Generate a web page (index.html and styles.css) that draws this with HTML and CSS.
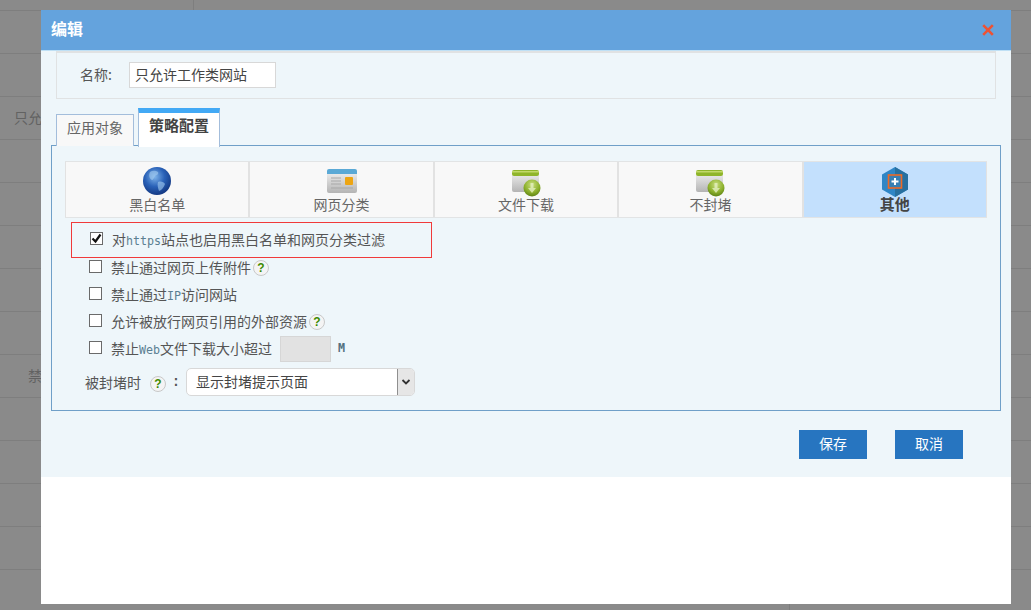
FILE: index.html
```html
<!DOCTYPE html>
<html lang="zh-CN">
<head>
<meta charset="utf-8">
<title>编辑</title>
<link rel="stylesheet" href="styles.css">
</head>
<body>
<svg class="defs" width="0" height="0" aria-hidden="true">
  <defs>
    <radialGradient id="globe" cx="0.42" cy="0.35" r="0.7">
      <stop offset="0" stop-color="#7fb4ea"/><stop offset="0.5" stop-color="#2a62b8"/><stop offset="1" stop-color="#10337c"/>
    </radialGradient>
    <linearGradient id="box" x1="0" y1="0" x2="0" y2="1">
      <stop offset="0" stop-color="#f6f6f6"/><stop offset="1" stop-color="#b4b4b4"/>
    </linearGradient>
    <radialGradient id="ball" cx="0.5" cy="0.3" r="0.75">
      <stop offset="0" stop-color="#c9de7e"/><stop offset="0.6" stop-color="#8cb02c"/><stop offset="1" stop-color="#557a10"/>
    </radialGradient>
    <symbol id="dl" viewBox="0 0 30 28">
      <rect x="1" y="1" width="27" height="22" rx="2" fill="url(#box)"/>
      <rect x="1" y="1" width="27" height="6" rx="2" fill="#8fb52a"/>
      <rect x="1" y="2" width="27" height="1.5" fill="#c2d96a"/>
      <circle cx="21" cy="19" r="8.5" fill="url(#ball)"/>
      <path d="M19.5 14h3v5h2.5L21 24l-4-5h2.5z" fill="#e4efc0" opacity=".8"/>
    </symbol>
  </defs>
</svg>

<main class="page">
  <div class="row row-top"></div>
  <div class="row"></div>
  <div class="row"></div>
  <div class="row"><span class="cell">只允</span></div>
  <div class="row"></div><div class="row"></div><div class="row"></div><div class="row"></div><div class="row"></div>
  <div class="row"><span class="cell">禁</span></div>
  <div class="row"></div><div class="row"></div><div class="row"></div><div class="row"></div><div class="row"></div>
</main>

<div class="bottom-line"></div>

<section class="dialog">
  <header class="dialog-head">
    <h1 class="dialog-title">编辑</h1>
    <svg class="close" viewBox="0 0 12 12" width="12" height="12"><path d="M1.2 1.2l9.6 9.6M10.8 1.2l-9.6 9.6" stroke="#ee5233" stroke-width="2.6" fill="none"/></svg>
  </header>

  <div class="dialog-body">
    <div class="name-box">
      <span class="name-label">名称:</span>
      <span class="name-input">只允许工作类网站</span>
    </div>

    <div class="tabs">
      <span class="tab">应用对象</span>
      <span class="tab tab-active">策略配置</span>
    </div>

    <div class="panel">
      <div class="nav">
        <div class="nav-item">
          <span class="nav-icon">
            <svg viewBox="0 0 28 28" width="28" height="28">
              <circle cx="14" cy="14" r="14" fill="url(#globe)"/>
              <path d="M7 5c3-2 6-1 8 0 1 2-1 3-3 4-1 2-2 4-3 4-2-1-4-4-2-8zM15 15c3-1 6 0 7 2-1 3-3 6-6 7-1-3-2-6-1-9z" fill="#a5cdf0" opacity=".6"/>
            </svg>
          </span>
          <span class="nav-text">黑白名单</span>
        </div>
        <div class="nav-item">
          <span class="nav-icon nav-icon-low">
            <svg viewBox="0 0 30 24" width="30" height="24">
              <rect width="30" height="24" rx="2" fill="url(#box)"/>
              <path d="M0 5V2a2 2 0 0 1 2-2h26a2 2 0 0 1 2 2v3z" fill="#5aa9d6"/>
              <rect x="18" y="8" width="8" height="8" rx="1" fill="#eda512"/>
              <path d="M4 9h10M4 12h10M4 15h10M4 19h22" stroke="#a8a8a8" stroke-width="1.2"/>
            </svg>
          </span>
          <span class="nav-text">网页分类</span>
        </div>
        <div class="nav-item">
          <span class="nav-icon nav-icon-low"><svg width="30" height="28"><use href="#dl"/></svg></span>
          <span class="nav-text">文件下载</span>
        </div>
        <div class="nav-item">
          <span class="nav-icon nav-icon-low"><svg width="30" height="28"><use href="#dl"/></svg></span>
          <span class="nav-text">不封堵</span>
        </div>
        <div class="nav-item nav-item-active">
          <span class="nav-icon">
            <svg viewBox="0 0 26 30" width="26" height="30">
              <path d="M13 0l13 7.5v15L13 30 0 22.500v-15z" fill="#2f86c6"/>
              <path d="M13 0l13 7.5v15L13 30z" fill="#28709f"/>
              <rect x="6.500" y="8" width="13" height="13" fill="#3a7fb2" stroke="#ee6a25" stroke-width="1.6"/>
              <path d="M13 11v7M9.500 14.500h7" stroke="#fff" stroke-width="2"/>
            </svg>
          </span>
          <span class="nav-text">其他</span>
        </div>
      </div>

      <div class="options">
        <label class="option option-marked">
          <span class="check check-on"><svg viewBox="0 0 13 13" width="13" height="13"><path d="M2.500 6.500l3 3 5-7" stroke="#111" stroke-width="2.200" fill="none"/></svg></span>
          <span>对<span class="latin">https</span>站点也启用黑白名单和网页分类过滤</span>
        </label>
        <label class="option">
          <span class="check"></span><span>禁止通过网页上传附件</span><span class="help">?</span>
        </label>
        <label class="option">
          <span class="check"></span><span>禁止通过<span class="latin">IP</span>访问网站</span>
        </label>
        <label class="option">
          <span class="check"></span><span>允许被放行网页引用的外部资源</span><span class="help">?</span>
        </label>
        <label class="option">
          <span class="check"></span><span>禁止<span class="latin">Web</span>文件下载大小超过</span>
          <span class="size-input"></span><span class="latin unit">M</span>
        </label>
      </div>

      <div class="blocked">
        <span class="blocked-label">被封堵时</span><span class="help help-spaced">?</span><span class="colon">:</span>
        <div class="select">
          <span class="select-value">显示封堵提示页面</span>
          <span class="select-arrow"><svg viewBox="0 0 10 6" width="10" height="6"><path d="M1.500 1l3.500 3.500L8.500 1" stroke="#333" stroke-width="1.800" fill="none"/></svg></span>
        </div>
      </div>
    </div>

    <div class="actions">
      <button class="btn" type="button">保存</button>
      <button class="btn" type="button">取消</button>
    </div>
  </div>
</section>
</body>
</html>
```

FILE: styles.css
```css
* { box-sizing: border-box; }

html, body {
  margin: 0;
  height: 610px;
  overflow: hidden;
}

body {
  position: relative;
  background: #8a8a8a;
  color: #555;
  font: 14px "Noto Sans CJK SC", "Liberation Sans", sans-serif;
}

.defs { position: absolute; }

.page { display: flex; flex-direction: column; }

.row {
  height: 43px;
  flex: none;
  display: flex;
  align-items: center;
  padding-bottom: 2px;
  border-bottom: 1px solid #7e7e7e;
}

.row-top {
  height: 11px;
  background: linear-gradient(to right, transparent 193px, #7e7e7e 193px, #7e7e7e 194px, transparent 194px);
}

.cell {
  width: 42px;
  text-align: right;
  white-space: nowrap;
  color: #626262;
}

.bottom-line {
  position: absolute;
  left: 789px;
  top: 604px;
  width: 1px;
  height: 6px;
  background: #7e7e7e;
}

.dialog {
  position: absolute;
  left: 41px;
  top: 10px;
  width: 970px;
  height: 594px;
  background: #fff;
}

.dialog-head {
  height: 41px;
  padding: 0 17px 1px 10px;
  display: flex;
  align-items: center;
  justify-content: space-between;
  background: #64a3dd;
  border-bottom: 1px solid #bfe0f5;
}

.dialog-title {
  margin: 0 0 3px;
  font-size: 16px;
  font-weight: 700;
  color: #fff;
  line-height: 36px;
}

.dialog-body {
  height: 426px;
  padding: 0 10px;
  background: #eef6fa;
}

.name-box {
  height: 48px;
  margin: 0 5px;
  padding: 9px 0 0 23px;
  display: flex;
  align-items: flex-start;
  border: 1px solid #e0e2e3;
  border-top-width: 2px;
}

.name-label {
  width: 49px;
  line-height: 24px;
}

.name-input {
  width: 147px;
  height: 26px;
  padding-left: 5px;
  line-height: 22px;
  background: #fff;
  border: 1px solid #d8d8d8;
  color: #444;
}

.tabs {
  height: 47px;
  margin-bottom: -1px;
  padding-left: 5px;
  display: flex;
  align-items: flex-end;
  gap: 4px;
  position: relative;
}

.tab {
  width: 78px;
  height: 32px;
  text-align: center;
  line-height: 24px;
  background: #f8f8f8;
  border: 1px solid #a3bddb;
  border-bottom: 0;
  color: #666;
}

.tab-active {
  width: 82px;
  height: 39px;
  line-height: 24px;
  font-size: 15px;
  font-weight: 700;
  color: #444;
  background: #fff;
  border-color: #a3bddb;
  border-top: 5px solid #42a9f5;
  margin-bottom: -1px;
  position: relative;
  z-index: 1;
}

.panel {
  height: 266px;
  padding: 15px 13px 0;
  border: 1px solid #6f9fc8;
}

.nav {
  height: 57px;
  display: grid;
  grid-template-columns: repeat(5, 1fr);
  border-top: 1px solid #e2e4e5;
  border-bottom: 1px solid #e2e4e5;
}

.nav-item {
  display: flex;
  flex-direction: column;
  align-items: center;
  background: #f8f8f8;
  border-left: 1px solid #e2e2e2;
  border-right: 1px solid #e2e2e2;
  color: #666;
}

.nav-item-active {
  background: #c3e0fd;
  color: #444;
  font-size: 15px;
  font-weight: 700;
}

.nav-icon {
  height: 33px;
  padding-top: 5px;
  display: flex;
  align-items: flex-start;
}

.nav-icon-low { padding-top: 7px; }

.nav-text {
  line-height: 20px;
  margin-top: -1px;
}

.options {
  display: flex;
  flex-direction: column;
  margin-top: 4px;
}

.option {
  height: 27px;
  padding-left: 24px;
  padding-bottom: 2px;
  display: flex;
  align-items: center;
  white-space: nowrap;
  color: #555;
}

.option-marked {
  width: 361px;
  height: 36px;
  margin-left: 6px;
  margin-bottom: -4px;
  padding-left: 18px;
  border: 1px solid #f03a3a;
}

.check {
  flex: none;
  width: 13px;
  height: 13px;
  margin-right: 9px;
  margin-top: -1px;
  background: #fff;
  border: 1px solid #6a6a6a;
  display: flex;
  align-items: center;
  justify-content: center;
}

.check svg { margin: -1px; }

.latin {
  font-family: "DejaVu Sans Mono", monospace;
  font-size: 11.67px;
  color: #5b7f92;
}

.help {
  flex: none;
  width: 16px;
  height: 16px;
  margin-left: 2px;
  margin-top: 3px;
  border-radius: 50%;
  border: 1px solid #c8c8c8;
  background: #f4f4f4;
  color: #3d8a00;
  font: 700 12px/14px "Liberation Sans", sans-serif;
  text-align: center;
}

.size-input {
  width: 51px;
  height: 26px;
  margin-left: 8px;
  margin-top: 2px;
  background: #e2e2e2;
  border: 1px solid #d6d6d6;
}

.unit {
  margin-left: 7px;
  font-weight: 700;
  color: #53707f;
}

.blocked {
  margin-top: 6px;
  padding-left: 20px;
  display: flex;
  align-items: center;
  height: 28px;
}

.blocked-label { margin-bottom: 1px; }

.help-spaced { margin-left: 9px; margin-top: 3px; }

.colon {
  width: 20px;
  text-align: center;
  font-family: "Liberation Mono", monospace;
  font-weight: 700;
}

.select {
  width: 229px;
  height: 28px;
  display: flex;
  background: #fff;
  border: 1px solid #d8d8d8;
  border-radius: 5px;
  overflow: hidden;
}

.select-value {
  flex: 1;
  padding-left: 9px;
  line-height: 25px;
  color: #444;
}

.select-arrow {
  width: 17px;
  display: flex;
  align-items: center;
  justify-content: center;
  background: #e6e6e6;
  border-left: 1px solid #8f8f8f;
}

.actions {
  padding: 19px 38px 0 0;
  display: flex;
  justify-content: flex-end;
  gap: 28px;
}

.btn {
  width: 68px;
  height: 29px;
  padding: 0 0 4px;
  border: 0;
  background: #2775c0;
  color: #fff;
  font: inherit;
}
```
